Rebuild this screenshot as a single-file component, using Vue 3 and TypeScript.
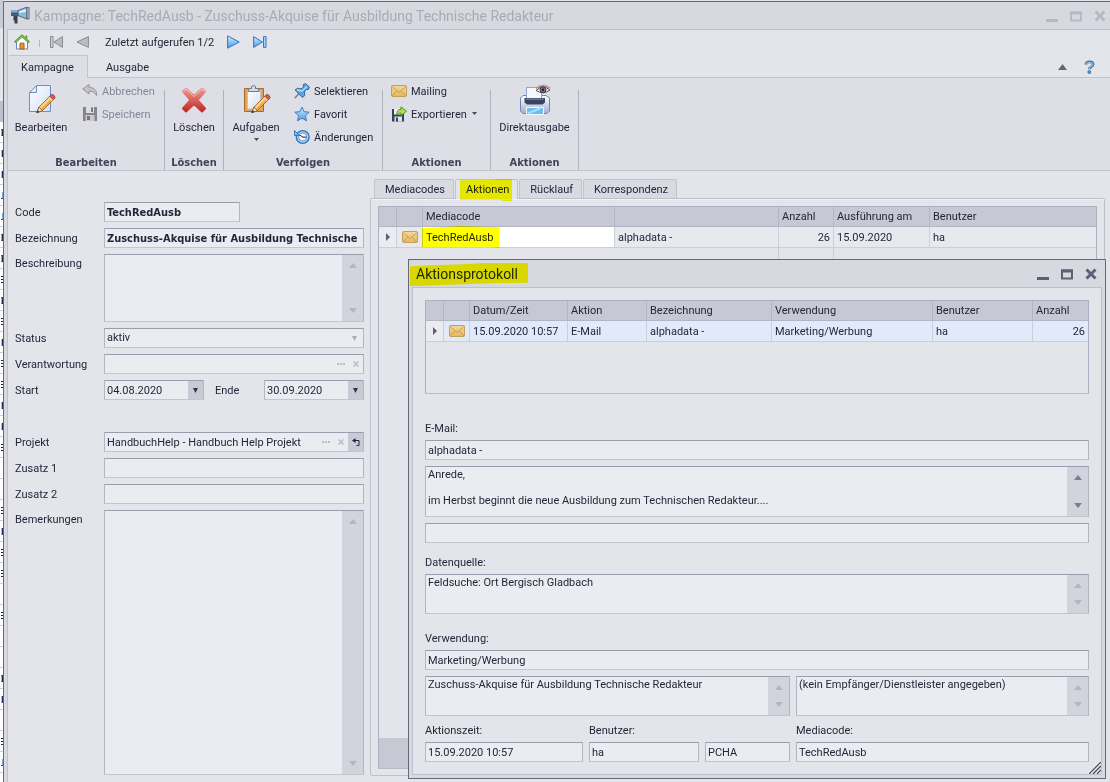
<script setup lang="ts">
import { ref } from 'vue'

type Stroke = 'bow' | 'stem' | 'bars' | 'foot' | 'none'
const backRows: Stroke[] = ['bow', 'stem', 'stem', 'foot', 'foot', 'bow', 'bow', 'bars', 'bow', 'bars', 'stem', 'bars', 'bars', 'stem', 'stem', 'bars', 'none', 'none', 'bars', 'stem', 'bars', 'bars', 'none', 'bars', 'none', 'none', 'bow', 'stem', 'none', 'bars', 'foot', 'none']

const tabs: string[] = ['Mediacodes', 'Aktionen', 'Rücklauf', 'Korrespondenz']
const activeTab = ref('Aktionen')

const code = ref('TechRedAusb')
const bezeichnung = ref('Zuschuss-Akquise für Ausbildung Technische')
const beschreibung = ref('')
const status = ref('aktiv')
const verantwortung = ref('')
const start = ref('04.08.2020')
const ende = ref('30.09.2020')
const projekt = ref('HandbuchHelp - Handbuch Help Projekt')
const zusatz1 = ref('')
const zusatz2 = ref('')
const bemerkungen = ref('')

const betreff = ref('alphadata -')
const nachricht = ref('Anrede,\n\nim Herbst beginnt die neue Ausbildung zum Technischen Redakteur....')
const anhang = ref('')
const quelle = ref('Feldsuche: Ort Bergisch Gladbach')
const verwendung = ref('Marketing/Werbung')
const zweck = ref('Zuschuss-Akquise für Ausbildung Technische Redakteur')
const empfaenger = ref('(kein Empfänger/Dienstleister angegeben)')
const zeit = ref('15.09.2020 10:57')
const benutzer = ref('ha')
const rechner = ref('PCHA')
const mediacode = ref('TechRedAusb')
</script>

<template>
  <div class="desktop">
    <svg width="0" height="0" class="defs" aria-hidden="true">
      <defs>
        <linearGradient id="blue" x1="0" y1="0" x2="0" y2="1"><stop offset="0" stop-color="#d3ecfb" /><stop offset="1" stop-color="#4c9be0" /></linearGradient>
        <linearGradient id="red" x1="0" y1="0" x2="0" y2="1"><stop offset="0" stop-color="#f09a92" /><stop offset="1" stop-color="#bf2a25" /></linearGradient>
        <linearGradient id="paper" x1="0" y1="0" x2="1" y2="1"><stop offset="0" stop-color="#ffffff" /><stop offset="1" stop-color="#cfdff5" /></linearGradient>
        <linearGradient id="gold" x1="0" y1="0" x2="0" y2="1"><stop offset="0" stop-color="#f6d796" /><stop offset="1" stop-color="#e6b75f" /></linearGradient>
        <linearGradient id="print" x1="0" y1="0" x2="0" y2="1"><stop offset="0" stop-color="#ffffff" /><stop offset="1" stop-color="#9fb0d2" /></linearGradient>
        <symbol id="mail" viewBox="0 0 16 12">
          <rect x=".5" y=".5" width="15" height="11" rx="1" fill="url(#gold)" stroke="#c2a05c" />
          <path d="M1 1.5 8 7.5 15 1.5M1 11 6 6M15 11 10 6" fill="none" stroke="#bf9550" stroke-width=".8" />
        </symbol>
        <symbol id="pencil" viewBox="0 0 24 24">
          <path d="M2 22 4.5 15.500 18 2 22 6 8.500 19.500Z" fill="#f5a93b" stroke="#a5622a" />
          <path d="M5.500 15.500 17 4 18.500 5.500 7 17Z" fill="#fbd98c" />
          <path d="M17 3 19 1Q22.500 1 23 5L21 7Z" fill="#d9604f" stroke="#9c3c30" />
          <path d="M16 4.500 19.500 8" stroke="#d8dbe6" stroke-width="1.600" />
          <path d="M2 22 4.500 15.500 8.500 19.500Z" fill="#f8e2bd" stroke="#8a6038" />
          <path d="M1.600 22.400 2.800 18.900 5.200 21.200Z" fill="#333a52" />
        </symbol>
      </defs>
    </svg>

    <div class="behind" aria-hidden="true">
      <div class="behind-head"></div>
      <div v-for="(r, i) in backRows" :key="i" class="behind-row"><i :class="r"></i></div>
    </div>

    <div class="window">
      <header class="titlebar">
        <svg class="app-icon" width="20" height="18" viewBox="0 0 20 18">
          <path d="M1 3H9V9H1Z" fill="#3f5f7c" /><path d="M1 3H9V5.5H1Z" fill="#7fb0d4" />
          <path d="M8 3.5 17 0V12L8 8.6Z" fill="#8fb9d9" stroke="#35526d" stroke-width=".8" />
          <path d="M9 4.6 16 2V5L9 6Z" fill="#d9eefb" /><path d="M17 0H19V12H17Z" fill="#c9ced8" stroke="#4a5263" stroke-width=".8" />
          <path d="M3.5 9H7.5V16.5H4.5V13.5H3.5Z" fill="#39414f" />
        </svg>
        <h1>Kampagne: TechRedAusb - Zuschuss-Akquise für Ausbildung Technische Redakteur</h1>
        <div class="winbtns faded">
          <button type="button" aria-label="Minimieren"><svg width="12" height="12" viewBox="0 0 12 12"><path d="M0 9H12V12H0Z" fill="currentColor" /></svg></button>
          <button type="button" aria-label="Maximieren"><svg width="12" height="12" viewBox="0 0 12 12"><path d="M1 2.5H11V10.5H1Z" fill="none" stroke="currentColor" stroke-width="2" /><path d="M0 1.5H12V4.5H0Z" fill="currentColor" /></svg></button>
          <button type="button" aria-label="Schließen"><svg width="12" height="12" viewBox="0 0 12 12"><path d="M1.5 1.5 10.5 10.5M10.5 1.5 1.5 10.5" stroke="currentColor" stroke-width="3" /></svg></button>
        </div>
      </header>

      <div class="client">
        <nav class="quick">
          <button type="button" aria-label="Start"><svg width="16" height="16" viewBox="0 0 16 16">
            <path d="M2.5 7.5V15H13.5V7.5L8 2.5Z" fill="#fbfaf4" stroke="#6b86b6" />
            <path d="M.8 8.4 8 1.8 15.2 8.4" fill="none" stroke="#4b9c2e" stroke-width="2.2" /><path d="M1.3 8 8 1.9 14.7 8" fill="none" stroke="#9ede61" stroke-width=".8" />
            <path d="M11.5 1.5H13.2V5L11.5 3.6Z" fill="#5a8f45" /><path d="M6 9.2H10V15H6Z" fill="#e9923c" stroke="#a5601f" />
          </svg></button>
          <span class="qsep"></span>
          <button type="button" class="first" aria-label="Erster"><svg width="13" height="12" viewBox="0 0 13 12"><path d="M.5.5H3V11.5H.5Z" fill="#d0d0d4" stroke="#8a8a92" /><path d="M12.4.6V11.4L4 6Z" fill="#bcbcc2" stroke="#8a8a92" /></svg></button>
          <button type="button" class="prev" aria-label="Zurück"><svg width="13" height="12" viewBox="0 0 13 12"><path d="M12.4.6V11.4L1 6Z" fill="#bcbcc2" stroke="#8a8a92" /></svg></button>
          <span class="recent">Zuletzt aufgerufen 1/2</span>
          <button type="button" class="next" aria-label="Vor"><svg width="13" height="14" viewBox="0 0 13 14"><path d="M.6.8V13.2L12.2 7Z" fill="url(#blue)" stroke="#2a78c9" /></svg></button>
          <button type="button" aria-label="Letzter"><svg width="14" height="12" viewBox="0 0 14 12"><path d="M.6.6V11.4L9.4 6Z" fill="url(#blue)" stroke="#2a78c9" /><path d="M10.5.6H13V11.4H10.5Z" fill="#a9d3f4" stroke="#2a78c9" /></svg></button>
        </nav>

        <div class="ribbon-tabs">
          <button type="button" class="rtab on">Kampagne</button>
          <button type="button" class="rtab">Ausgabe</button>
          <div class="help">
            <button type="button" aria-label="Menüband minimieren"><svg width="9" height="6" viewBox="0 0 9 6"><path d="M0 6 4.5 0 9 6Z" fill="#62677c" /></svg></button>
            <button type="button" aria-label="Hilfe"><svg width="11" height="14" viewBox="0 0 11 14"><path d="M2 4.5C2 1 9 1 9 4.5 9 7 5.3 6.4 5.3 9.3" fill="none" stroke="#3a70a6" stroke-width="2.8" /><path d="M2.2 4.3C2.4 1.8 8.4 1.6 8.6 4.3 8.6 6.5 5.3 6.6 5.3 9" fill="none" stroke="#8cc0ea" stroke-width="1.3" /><circle cx="5.3" cy="12" r="1.5" fill="#5c9fd8" stroke="#2b6396" stroke-width=".8" /></svg></button>
          </div>
        </div>

        <div class="ribbon">
          <section class="group g1">
            <div class="items">
              <button type="button" class="big"><svg width="30" height="32" viewBox="0 0 30 32">
                <path d="M3.500 8.500 10.500 1.500H24.500V27.500H3.500Z" fill="url(#paper)" stroke="#6e8fc6" /><path d="M3.500 8.500H10.500V1.500Z" fill="#e3edfa" stroke="#6e8fc6" />
                <use href="#pencil" x="9" y="9" width="21" height="22" /></svg><span>Bearbeiten</span></button>
              <div class="smalls">
                <button type="button" class="small off"><svg width="16" height="16" viewBox="0 0 16 16"><path d="M.8 6 7 1.5V4.4C12 4.4 15 7.5 14.6 12.6 12.8 9.4 11 8.2 7 8.2V11Z" fill="#c3c3c8" stroke="#929298" /></svg><span>Abbrechen</span></button>
                <button type="button" class="small off"><svg width="16" height="16" viewBox="0 0 16 16"><path d="M1 1H15V15H1Z" fill="#85858b" /><path d="M4 1H12V7H4Z" fill="#dedee2" /><path d="M3.5 9H12.5V15H3.5Z" fill="#c9c9ce" /><path d="M5 10H8V14H5ZM9 1.5H11V6H9Z" fill="#77777d" /></svg><span>Speichern</span></button>
              </div>
            </div>
            <h2>Bearbeiten</h2>
          </section>
          <i class="rsep"></i>
          <section class="group g2">
            <div class="items">
              <button type="button" class="big"><svg width="30" height="32" viewBox="0 0 30 32"><path d="M4 7.500 7 4.500 15 12 23 4.500 26 7.500 18.500 16 26 24.500 23 27.500 15 20 7 27.500 4 24.500 11.500 16Z" fill="url(#red)" stroke="url(#red)" stroke-width="2" stroke-linejoin="round" /><path d="M4.500 7.500 7 5 15 12.500 23 5 25.500 7.500" fill="none" stroke="#f8c3bd" stroke-width=".9" /></svg><span>Löschen</span></button>
            </div>
            <h2>Löschen</h2>
          </section>
          <i class="rsep"></i>
          <section class="group g3">
            <div class="items">
              <button type="button" class="big"><svg width="30" height="32" viewBox="0 0 30 32">
                <path d="M3.500 4.500H22.500V27.500H3.500Z" fill="#e4a24a" stroke="#a86a2c" /><path d="M6.500 7.500H19.500V25H6.500Z" fill="url(#paper)" stroke="#b8c4d8" />
                <path d="M7.500 7.500V4.500H10.500V2.500Q12.500.500 14.500 2.500V4.500H17.500V7.500Z" fill="#d6d9e2" stroke="#72788c" />
                <use href="#pencil" x="9" y="9" width="21" height="22" /></svg><span>Aufgaben</span><svg class="drop" width="5" height="3" viewBox="0 0 5 3"><path d="M0 0H5L2.500 3Z" fill="#444858" /></svg></button>
              <div class="smalls">
                <button type="button" class="small"><svg width="16" height="16" viewBox="0 0 16 16"><path d="M.8 15.200 5 10.500" stroke="#777c8a" stroke-width="1.400" /><path d="M1 7 3.500 5.200 7 6 9.500 3.800 9.200 1.600 11.500.600 15.400 4 14.600 6.400 12.200 6.400 10.400 9 10.800 12.400 8.600 14.600Z" fill="#5ba6e0" stroke="#21609f" stroke-width=".9" /><path d="M3 7 8 8 13 3.500" fill="none" stroke="#b5dcf6" stroke-width="1.400" /></svg><span>Selektieren</span></button>
                <button type="button" class="small"><svg width="16" height="16" viewBox="0 0 16 16"><path d="M8 1 10.100 5.700 15.200 6.200 11.400 9.700 12.500 14.800 8 12.200 3.500 14.800 4.600 9.700.8 6.200 5.900 5.700Z" fill="url(#blue)" stroke="#3f7fc4" /></svg><span>Favorit</span></button>
                <button type="button" class="small"><svg width="16" height="16" viewBox="0 0 16 16"><circle cx="8.700" cy="8" r="6.400" fill="#a8d3f4" stroke="#2e78bf" stroke-width="1.400" /><circle cx="8.700" cy="8" r="4" fill="#f5fbff" stroke="#5b9ed8" /><path d="M.5 1.500V6.500H5.500L4 5Z" fill="#7cbbec" stroke="#2465a5" stroke-width=".8" /><path d="M6 6.200 9 8.300" stroke="#333" /><path d="M8.500 8.200H12" stroke="#d62c1c" stroke-width="1.400" /></svg><span>Änderungen</span></button>
              </div>
            </div>
            <h2>Verfolgen</h2>
          </section>
          <i class="rsep"></i>
          <section class="group g4">
            <div class="items">
              <div class="smalls">
                <button type="button" class="small"><svg width="16" height="12"><use href="#mail" width="16" height="12" /></svg><span>Mailing</span></button>
                <button type="button" class="small"><svg width="16" height="16" viewBox="0 0 16 16"><path d="M1 3H13V15.500H1Z" fill="#38405a" /><path d="M3 3H10V8.500H3Z" fill="#eef1f8" /><path d="M3.500 10.500H11V15.500H3.500Z" fill="#dfe4ee" /><path d="M5 11.500H7V15.500H5Z" fill="#38405a" /><path d="M6 9C5.500 5 7 3.500 10 3.500V.8L15.400 5.200 10 9.600V7C8 7 7 7.500 6 9Z" fill="#b4e24a" stroke="#4b8f1c" /></svg><span>Exportieren</span><svg class="caret" width="5" height="3" viewBox="0 0 5 3"><path d="M0 0H5L2.500 3Z" fill="#444858" /></svg></button>
              </div>
            </div>
            <h2>Aktionen</h2>
          </section>
          <i class="rsep"></i>
          <section class="group g5">
            <div class="items">
              <button type="button" class="big"><svg width="32" height="32" viewBox="0 0 32 32">
                <path d="M1.500 14 4 11.500H27L30.500 14V27L28 29.500H4L1.500 27Z" fill="url(#print)" stroke="#7385ad" />
                <path d="M7.500 15V3.500H22.500V15Z" fill="#f4f7fc" stroke="#8fa4ce" />
                <path d="M5.500 14H26V18.500L23.500 20.500H8L5.500 18.500Z" fill="#39445f" /><path d="M7 14.500H24.500V16H7Z" fill="#6a7794" />
                <path d="M7.500 23.500H24.500V30.500H7.500Z" fill="#6cbcf0" stroke="#f7fafd" /><path d="M9 29.500 22 24" stroke="#a9dcfa" stroke-width="2" />
                <path d="M17 6.500Q24 0 31 6Q24 11 17 6.500Z" fill="#fdf8f5" stroke="#5f473d" /><path d="M17 4.500Q24-1 31 4" fill="none" stroke="#c08a72" stroke-width="1.500" />
                <circle cx="24" cy="5.800" r="3" fill="#6c7f9c" stroke="#2d394c" /><circle cx="24" cy="5.800" r="1.200" fill="#141a26" /></svg><span>Direktausgabe</span></button>
            </div>
            <h2>Aktionen</h2>
          </section>
          <i class="rsep"></i>
        </div>

        <main class="body">
          <form class="details" @submit.prevent>
            <label for="code">Code</label>
            <input id="code" v-model="code" class="box strong short" type="text" />
            <label for="bez">Bezeichnung</label>
            <input id="bez" v-model="bezeichnung" class="box strong" type="text" />
            <label for="beschr" class="top">Beschreibung</label>
            <div class="area tall"><textarea id="beschr" v-model="beschreibung"></textarea>
              <div class="scroll"><button type="button" aria-label="Nach oben" class="up"></button><button type="button" aria-label="Nach unten" class="down"></button></div></div>
            <label for="status">Status</label>
            <div class="box combo">
              <select id="status" v-model="status"><option>aktiv</option></select>
              <svg class="sel" width="5" height="5" viewBox="0 0 5 5"><path d="M0 0H5L2.500 5Z" fill="#a9acba" /></svg>
            </div>
            <label for="verantw">Verantwortung</label>
            <div class="box combo"><input id="verantw" v-model="verantwortung" type="text" />
              <button type="button" class="mini" aria-label="Auswählen"><svg width="8" height="2" viewBox="0 0 8 2"><path d="M0 0H2V2H0ZM3 0H5V2H3ZM6 0H8V2H6Z" fill="#b9bbc5" /></svg></button>
              <button type="button" class="mini" aria-label="Leeren"><svg width="6" height="6" viewBox="0 0 6 6"><path d="M.5.500 5.500 5.500M5.500.500.500 5.500" stroke="#b9bbc5" stroke-width="1.500" /></svg></button>
            </div>
            <label for="start">Start</label>
            <div class="dates">
              <div class="box combo date"><input id="start" v-model="start" type="text" /><button type="button" class="pick" aria-label="Startdatum wählen"><svg width="5" height="5" viewBox="0 0 5 5"><path d="M0 0H5L2.500 5Z" fill="#33364a" /></svg></button></div>
              <label for="ende">Ende</label>
              <div class="box combo date"><input id="ende" v-model="ende" type="text" /><button type="button" class="pick" aria-label="Enddatum wählen"><svg width="5" height="5" viewBox="0 0 5 5"><path d="M0 0H5L2.500 5Z" fill="#33364a" /></svg></button></div>
            </div>
            <label for="projekt" class="spaced">Projekt</label>
            <div class="box combo spaced"><input id="projekt" v-model="projekt" type="text" />
              <button type="button" class="mini" aria-label="Projekt auswählen"><svg width="8" height="2" viewBox="0 0 8 2"><path d="M0 0H2V2H0ZM3 0H5V2H3ZM6 0H8V2H6Z" fill="#b9bbc5" /></svg></button>
              <button type="button" class="mini" aria-label="Projekt leeren"><svg width="6" height="6" viewBox="0 0 6 6"><path d="M.5.500 5.500 5.500M5.500.500.500 5.500" stroke="#b9bbc5" stroke-width="1.500" /></svg></button>
              <button type="button" class="pick" aria-label="Projekt öffnen"><svg width="8" height="8" viewBox="0 0 8 8"><path d="M2 2.500H7V7.500H4.500" fill="none" stroke="#24273a" /><path d="M0 2.500 3.500 0V5Z" fill="#24273a" /></svg></button>
            </div>
            <label for="z1">Zusatz 1</label>
            <input id="z1" v-model="zusatz1" class="box" type="text" />
            <label for="z2">Zusatz 2</label>
            <input id="z2" v-model="zusatz2" class="box" type="text" />
            <label for="bem" class="top">Bemerkungen</label>
            <div class="area fill"><textarea id="bem" v-model="bemerkungen"></textarea>
              <div class="scroll"><button type="button" aria-label="Nach oben" class="up"></button><button type="button" aria-label="Nach unten" class="down"></button></div></div>
          </form>

          <section class="pane">
            <div class="tabs">
              <button v-for="t in tabs" :key="t" type="button" class="tab" :class="{ on: t === activeTab }" @click="activeTab = t">
                <span :class="{ 'mark mark-tab': t === 'Aktionen' }">{{ t }}</span>
              </button>
            </div>
            <div class="sheet">
              <div class="gridbox">
                <table class="media">
                  <colgroup><col class="w18" /><col class="w26" /><col class="w192" /><col class="w164" /><col class="w55" /><col class="w96" /><col /></colgroup>
                  <thead><tr><th></th><th></th><th>Mediacode</th><th></th><th>Anzahl</th><th>Ausführung am</th><th>Benutzer</th></tr></thead>
                  <tbody>
                    <tr><td class="ind"><i></i></td><td class="pic"><svg width="16" height="12"><use href="#mail" width="16" height="12" /></svg></td>
                      <td class="white"><span class="mark mark-cell">TechRedAusb</span></td><td>alphadata -</td><td class="num">26</td><td>15.09.2020</td><td>ha</td></tr>
                    <tr class="rest"><td></td><td></td><td></td><td class="line"></td><td class="line"></td><td></td><td></td></tr>
                  </tbody>
                </table>
                <div class="gridfoot"></div>
              </div>
            </div>
          </section>

          <section class="dialog" role="dialog" aria-labelledby="dlg">
            <header class="dlghead">
              <h2 id="dlg"><span class="mark mark-title">Aktionsprotokoll</span></h2>
              <div class="winbtns">
                <button type="button" aria-label="Minimieren"><svg width="12" height="12" viewBox="0 0 12 12"><path d="M0 9H12V12H0Z" fill="currentColor" /></svg></button>
                <button type="button" aria-label="Maximieren"><svg width="12" height="12" viewBox="0 0 12 12"><path d="M1 2.500H11V10.500H1Z" fill="none" stroke="currentColor" stroke-width="2" /><path d="M0 1.500H12V4.500H0Z" fill="currentColor" /></svg></button>
                <button type="button" aria-label="Schließen"><svg width="12" height="12" viewBox="0 0 12 12"><path d="M1.500 1.500 10.500 10.500M10.500 1.500 1.500 10.500" stroke="currentColor" stroke-width="3" /></svg></button>
              </div>
            </header>
            <div class="dlgbody">
              <div class="gridbox log">
                <table>
                  <colgroup><col class="w18" /><col class="w26" /><col class="w98" /><col class="w79" /><col class="w125" /><col class="w161" /><col class="w100" /><col /></colgroup>
                  <thead><tr><th></th><th></th><th>Datum/Zeit</th><th>Aktion</th><th>Bezeichnung</th><th>Verwendung</th><th>Benutzer</th><th>Anzahl</th></tr></thead>
                  <tbody>
                    <tr class="sel-row"><td class="ind"><i></i></td><td class="pic"><svg width="16" height="12"><use href="#mail" width="16" height="12" /></svg></td>
                      <td>15.09.2020 10:57</td><td>E-Mail</td><td>alphadata -</td><td>Marketing/Werbung</td><td>ha</td><td class="num">26</td></tr>
                  </tbody>
                </table>
              </div>

              <label for="mail-subj" class="l1">E-Mail:</label>
              <input id="mail-subj" v-model="betreff" class="box" type="text" />
              <div class="area msg"><textarea v-model="nachricht" aria-label="Nachricht"></textarea>
                <div class="scroll live"><button type="button" aria-label="Nach oben" class="up"></button><button type="button" aria-label="Nach unten" class="down"></button></div></div>
              <input v-model="anhang" class="box" type="text" aria-label="Anhang" />

              <label for="quelle" class="l2">Datenquelle:</label>
              <div class="area low"><textarea id="quelle" v-model="quelle"></textarea>
                <div class="scroll"><button type="button" aria-label="Nach oben" class="up"></button><button type="button" aria-label="Nach unten" class="down"></button></div></div>

              <label for="verw" class="l3">Verwendung:</label>
              <input id="verw" v-model="verwendung" class="box" type="text" />
              <div class="pair">
                <div class="area low"><textarea v-model="zweck" aria-label="Zweck"></textarea>
                  <div class="scroll"><button type="button" aria-label="Nach oben" class="up"></button><button type="button" aria-label="Nach unten" class="down"></button></div></div>
                <div class="area low"><textarea v-model="empfaenger" aria-label="Empfänger"></textarea>
                  <div class="scroll"><button type="button" aria-label="Nach oben" class="up"></button><button type="button" aria-label="Nach unten" class="down"></button></div></div>
              </div>
              <div class="meta">
                <div class="fld"><label for="zeit">Aktionszeit:</label><input id="zeit" v-model="zeit" class="box" type="text" /></div>
                <div class="fld"><label for="ben">Benutzer:</label><input id="ben" v-model="benutzer" class="box" type="text" /></div>
                <div class="fld"><input v-model="rechner" class="box" type="text" aria-label="Rechner" /></div>
                <div class="fld"><label for="mc">Mediacode:</label><input id="mc" v-model="mediacode" class="box" type="text" /></div>
              </div>
            </div>
            <svg class="grip" width="12" height="12" viewBox="0 0 12 12"><path d="M0 12 12 0M4 12 12 4M8 12 12 8" stroke="#3f4350" stroke-width="1.200" /></svg>
          </section>
        </main>
      </div>
    </div>
  </div>
</template>

<style>
body { background: #e4e5ea; }
</style>

<style scoped>
.desktop, .desktop * { box-sizing: border-box; }
.desktop { display: flex; min-height: 100vh; font: 11px/14px Roboto, "Open Sans", sans-serif; color: #24263a; background: #e4e5ea; overflow: hidden; }
.defs { position: absolute; }
button, input, textarea, select { font: inherit; color: inherit; margin: 0; }
button { border: 0; padding: 0; background: none; display: flex; align-items: center; }
svg { display: block; flex: none; }
h1, h2 { margin: 0; font-weight: normal; }

.behind { width: 3px; flex: none; background: #fff; overflow: hidden; height: 100vh; }
.behind-head { height: 122px; background: linear-gradient(#c9cad3 28px, #e4e5ea 28px, #e4e5ea 101px, #bcc0cf 101px); }
.behind-row { height: 21px; border-bottom: 1px solid #d0d1d8; display: flex; align-items: center; justify-content: flex-end; }
.behind-row i { width: 2px; height: 7px; }
.behind-row .stem { background: linear-gradient(90deg, #e0b070 1px, #27305e 1px); }
.behind-row .bow { border: 1px solid #2a2a4a; border-left-color: #d9a566; }
.behind-row .bars { background: repeating-linear-gradient(#23233c 0 1px, #fff 1px 3px); }
.behind-row .foot { border-bottom: 1px solid #23233c; border-right: 1px solid #7ba4d4; }

.window { flex: 1; min-width: 0; display: flex; flex-direction: column; margin-top: 1px; border-top: 1px solid #66697c; border-left: 1px solid #66697c; background: #d8d8e0; padding-left: 3px; }
.titlebar { height: 27px; display: flex; align-items: center; padding: 0 4px 0 3px; gap: 4px; }
.titlebar h1 { flex: 1; font-size: 14px; line-height: 20px; color: #a9aab5; white-space: nowrap; }
.winbtns { display: flex; gap: 12px; color: #5c6072; }
.faded { color: #b7b8c3; }
.client { flex: 1; display: flex; flex-direction: column; border-top: 1px solid #bfc0ca; border-left: 1px solid #bfc0ca; background: #e4e5ea; }

.quick { height: 25px; display: flex; align-items: center; padding: 0 0 2px 6px; }
.qsep { width: 1px; height: 7px; background: #b3b4be; margin: 4px 10px 0 9px; }
.prev { margin-left: 13px; }
.recent { width: 110px; padding-top: 2px; margin: 0 12px 0 16px; }
.next { margin-right: 13px; }

.ribbon-tabs { display: flex; height: 23px; box-shadow: inset 0 -1px #c2c3cc; }
.rtab { padding: 2px 18px 0; }
.rtab.on { width: 80px; justify-content: center; padding: 1px 0 0; background: #dedfe6; border: 1px solid #c2c3cc; border-bottom: 0; border-left: 0; border-radius: 2px 2px 0 0; }
.help { margin-left: auto; display: flex; align-items: center; gap: 17px; padding-right: 15px; }

.ribbon { display: flex; height: 93px; background: #dedfe6; border-bottom: 1px solid #c2c3cc; }
.rsep { width: 1px; margin-top: 12px; background: #b0b1bb; }
.group { display: flex; flex-direction: column; }
.group h2 { font: bold 11px/15px "DejaVu Sans Condensed", "DejaVu Sans", sans-serif; color: #41435a; text-align: center; margin-top: auto; }
.items { display: flex; height: 72px; padding-top: 1px; }
.g1 { width: 156px; } .g2 { width: 58px; } .g3 { width: 158px; } .g4 { width: 107px; } .g5 { width: 87px; }
.big { flex-direction: column; width: 66px; padding-top: 5px; }
.big span { margin-top: 5px; white-space: nowrap; }
.g2 .big { width: 58px; }
.g3 .big { width: 64px; }
.g5 .big { width: 87px; }
.drop { margin-top: 3px; }
.smalls { padding-left: 8px; }
.g3 .smalls { padding-left: 6px; }
.small { height: 23px; gap: 4px; }
.small span { padding-top: 2px; }
.small.off { color: #85869a; }
.caret { margin-left: 1px; }

.body { flex: 1; position: relative; display: flex; }
.details { width: 356px; display: grid; grid-template-columns: 89px 1fr; grid-template-rows: repeat(2, 20px) 68px repeat(3, 20px) 46px repeat(2, 20px) 1fr; row-gap: 6px; padding: 31px 0 7px 7px; }
.details label { line-height: 22px; }
.details .top { line-height: 20px; }
.spaced { margin-top: 26px; }
.box { width: 100%; height: 20px; min-width: 0; background: #ebecf1; border: 1px solid #b3b5c3; border-top-color: #9a9caf; border-bottom-color: #c3c4cd; border-radius: 0; padding: 0 2px; outline: 0; }
.strong { font: bold 11px/14px "DejaVu Sans Condensed", "DejaVu Sans", sans-serif; }
.short { width: 136px; }
.combo { display: flex; align-items: center; padding: 0; }
.combo input, .combo select { flex: 1; min-width: 0; height: 18px; border: 0; background: none; padding: 0 2px; outline: 0; appearance: none; }
.combo .sel { margin: 0 6px 0 -11px; pointer-events: none; }
.mini { width: 15px; height: 18px; justify-content: center; }
.pick { width: 15px; align-self: stretch; justify-content: center; background: #c8cad6; }
.dates { display: flex; }
.date { width: 100px; }
.dates label { width: 60px; padding-left: 11px; }
.area { display: flex; background: #ebecf1; border: 1px solid #b3b5c3; border-top-color: #9a9caf; border-bottom-color: #c3c4cd; min-width: 0; }
.area textarea { flex: 1; min-width: 0; height: 100%; resize: none; border: 0; background: none; padding: 1px 2px 0; line-height: 13px; outline: 0; overflow: hidden; }
.scroll { width: 21px; background: #d2d4dd; display: flex; flex-direction: column; align-items: center; justify-content: space-between; padding: 8px 0; color: #b3b5c0; }
.live { color: #7b7e90; }
.up, .down { border: 4px solid transparent; width: 8px; height: 5px; }
.up { border-top: 0; border-bottom: 5px solid currentColor; }
.down { border-bottom: 0; border-top: 5px solid currentColor; }

.pane { flex: 1; min-width: 0; margin-left: 6px; padding: 8px 5px 6px 0; display: flex; flex-direction: column; }
.tabs { display: flex; gap: 1px; padding-left: 4px; }
.tab { height: 19px; padding: 1px 8px 0 10px; border: 1px solid #c1c2cb; border-bottom: 0; background: #d8d9e1; border-radius: 2px 2px 0 0; }
.tab.on { background: #e4e5ea; height: 20px; margin-bottom: -1px; position: relative; }
.sheet { flex: 1; display: flex; border: 1px solid #bfc0ca; border-radius: 2px; padding: 7px 7px 6px 7px; box-shadow: inset 0 1px #f2f2f6; }
.gridbox { flex: 1; display: flex; flex-direction: column; border: 1px solid #adb0c2; border-bottom-color: #b9bac6; }
table { width: 100%; border-collapse: separate; border-spacing: 0; table-layout: fixed; }
th { height: 20px; padding: 0 3px; text-align: left; font-weight: normal; background: #c6c8d4; border-right: 1px solid #b3b5c4; border-bottom: 1px solid #b3b5c4; white-space: nowrap; line-height: 14px; }
td { height: 21px; padding: 2px 3px 0; background: #e8e9ef; border-right: 1px solid #cdced6; border-bottom: 1px solid #cdced6; white-space: nowrap; line-height: 14px; }
th:last-child, td:last-child { border-right: 0; }
.sel-row td { background: #e0eafb; }
td.ind, .sel-row td.ind { background: #ebecf1; padding: 0; }
.ind i { display: block; margin: 0 auto; width: 4px; height: 8px; border: 4px solid transparent; border-right: 0; border-left-color: #5c6072; }
td.pic { padding: 0 2px 0 5px; }
td.white { background: #fff; }
.num { text-align: right; }
.rest td { background: none; border-color: transparent; }
.rest td.line { border-right-color: #cdced6; }
.w18 { width: 18px; } .w26 { width: 26px; } .w192 { width: 192px; } .w164 { width: 164px; } .w55 { width: 55px; } .w96 { width: 96px; }
.w98 { width: 98px; } .w79 { width: 79px; } .w125 { width: 125px; } .w161 { width: 161px; } .w100 { width: 100px; }
.gridfoot { margin-top: auto; height: 30px; background: #c6c8d4; }

/* highlighter strokes */
.mark { position: relative; }
.mark::before { content: ""; position: absolute; inset: -4px -3px -4px -6px; background: #ff0; mix-blend-mode: multiply; pointer-events: none; }
.mark-tab::before { clip-path: polygon(0 6%, 60% 4%, 76% 0, 100% 0, 100% 100%, 84% 100%, 76% 94%, 0 94%); }
.mark-cell::before { inset: -5px -6px -4px -4px; clip-path: polygon(0 10%, 50% 0, 100% 6%, 100% 100%, 86% 94%, 0 96%); }
.mark-title::before { inset: -3px -10px -4px -6px; clip-path: polygon(0 14%, 20% 10%, 50% 4%, 62% 0, 100% 0, 100% 86%, 68% 88%, 28% 96%, 0 100%); }

.dialog { position: absolute; left: 400px; right: 4px; top: 88px; bottom: 3px; display: flex; flex-direction: column; background: #d8d8e0; border: 1px solid #66697c; padding: 0 3px 3px; }
.dlghead { height: 27px; flex: none; display: flex; align-items: center; justify-content: space-between; padding: 0 5px 0 4px; }
.dlghead h2 { font-size: 14px; line-height: 19px; padding-top: 2px; color: #24263a; }
.dlgbody { flex: 1; display: flex; flex-direction: column; background: #e4e5ea; border: 1px solid #bfc0ca; padding: 12px 12px 0; }
.log { flex: none; height: 94px; }
.dlgbody > *, .dlgbody .box { flex: none; }
.dlgbody label { line-height: 26px; height: 24px; }
.l1 { margin-top: 22px; }
.l2 { margin-top: 7px; }
.l3 { margin-top: 12px; }
.msg { height: 51px; margin: 6px 0; }
.low { height: 40px; }
.pair { display: grid; grid-template-columns: 365fr 293fr; gap: 6px; margin-top: 6px; }
.meta { display: grid; grid-template-columns: 158fr 110fr 85fr 293fr; gap: 6px; margin-top: 2px; align-items: end; }
.fld { display: flex; flex-direction: column; min-width: 0; }
.grip { position: absolute; right: 4px; bottom: 4px; }
</style>
